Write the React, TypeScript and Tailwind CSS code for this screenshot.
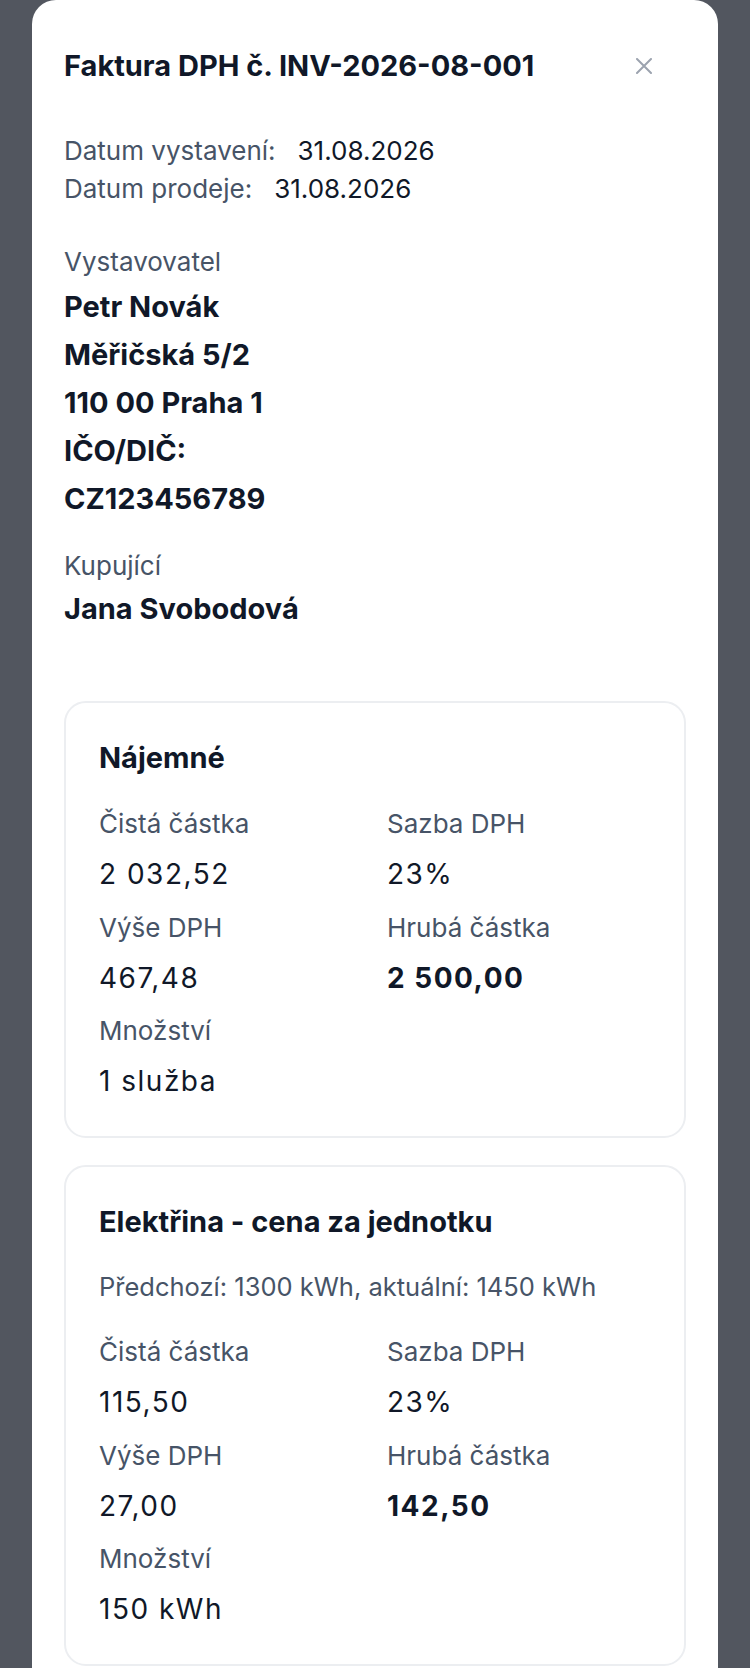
import React from "react";

const font = { fontFamily: "Inter, 'Noto Sans', sans-serif" };

function Cell({ label, value, bold }: { label: string; value: string; bold?: boolean }) {
  return (
    <div className="flex flex-col">
      <div className="text-[26px] leading-[40px] text-[#475467]">{label}</div>
      <div
        className={`mt-[10px] text-[28px] leading-[40px] tracking-[1.5px] text-[#101828] ${bold ? "font-bold" : ""}`}
      >
        {value}
      </div>
    </div>
  );
}

function Card({ title, note, cells }: { title: string; note?: string; cells: { label: string; value: string; bold?: boolean }[] }) {
  return (
    <div className="rounded-[22px] border-2 border-[#eceef1] bg-white px-[33px] pt-[35px] pb-[35px]">
      <div className="flex flex-col gap-[26px]">
        <div className="text-[29px] leading-[40px] font-bold text-[#101828]">{title}</div>
        {note && <div className="text-[25.5px] leading-[38px] text-[#475467]">{note}</div>}
        <div className="grid grid-cols-2 gap-x-[24px] gap-y-[13.5px]">
          {cells.map((c) => (
            <Cell key={c.label} {...c} />
          ))}
        </div>
      </div>
    </div>
  );
}

export default function App() {
  return (
    <div className="h-[1668px] overflow-hidden bg-[#52565f] px-[32px]" style={font}>
      <div className="min-h-[1700px] rounded-t-3xl bg-white px-[32px] pt-[46px]">
        <div className="flex items-center justify-between">
          <h1 className="text-[29px] leading-[40px] font-bold text-[#101828]">Faktura DPH č. INV-2026-08-001</h1>
          <svg className="mr-[34px]" width="16" height="16" viewBox="0 0 16 16" fill="none">
            <path d="M1 1L15 15M15 1L1 15" stroke="#9ca3af" strokeWidth="2" strokeLinecap="round" />
          </svg>
        </div>

        <div className="mt-[46px] text-[26px] leading-[38px]">
          <div className="flex">
            <span className="text-[#475467]">Datum vystavení:</span>
            <span className="ml-[22px] text-[#101828]">31.08.2026</span>
          </div>
          <div className="flex">
            <span className="text-[#475467]">Datum prodeje:</span>
            <span className="ml-[22px] text-[#101828]">31.08.2026</span>
          </div>
        </div>

        <div className="mt-[35px]">
          <div className="text-[26px] leading-[37px] text-[#475467]">Vystavovatel</div>
          <div className="mt-[3px] text-[29px] leading-[48px] font-bold text-[#101828]">
            <div>Petr Novák</div>
            <div>Měřičská 5/2</div>
            <div>110 00 Praha 1</div>
            <div>IČO/DIČ:</div>
            <div>CZ123456789</div>
          </div>
        </div>

        <div className="mt-[24px]">
          <div className="text-[26px] leading-[37px] text-[#475467]">Kupující</div>
          <div className="mt-[1px] text-[29px] leading-[48px] font-bold text-[#101828]">Jana Svobodová</div>
        </div>

        <div className="mt-[68px] flex flex-col gap-[27px]">
          <Card
            title="Nájemné"
            cells={[
              { label: "Čistá částka", value: "2 032,52" },
              { label: "Sazba DPH", value: "23%" },
              { label: "Výše DPH", value: "467,48" },
              { label: "Hrubá částka", value: "2 500,00", bold: true },
              { label: "Množství", value: "1 služba" },
            ]}
          />
          <Card
            title="Elektřina - cena za jednotku"
            note="Předchozí: 1300 kWh, aktuální: 1450 kWh"
            cells={[
              { label: "Čistá částka", value: "115,50" },
              { label: "Sazba DPH", value: "23%" },
              { label: "Výše DPH", value: "27,00" },
              { label: "Hrubá částka", value: "142,50", bold: true },
              { label: "Množství", value: "150 kWh" },
            ]}
          />
        </div>
      </div>
    </div>
  );
}
